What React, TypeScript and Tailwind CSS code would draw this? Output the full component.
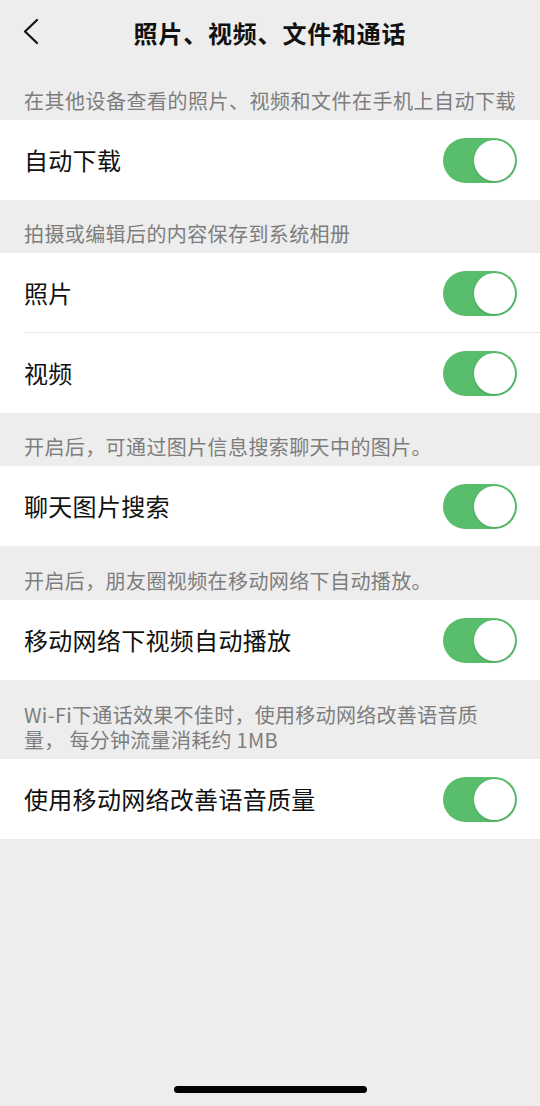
import React, { useState } from "react";

const font = { fontFamily: '"Noto Sans CJK SC", "Noto Sans", sans-serif' };

function Toggle({ on, onChange }: { on: boolean; onChange: () => void }) {
  return (
    <button
      onClick={onChange}
      className={`relative w-[74px] h-[45px] rounded-full transition-colors duration-200 ${on ? "bg-[#58be6b]" : "bg-[#e5e5e5]"}`}
    >
      <span
        className={`absolute top-[2px] w-[41px] h-[41px] rounded-full bg-white shadow-[0_1px_3px_rgba(0,0,0,0.15)] transition-all duration-200 ${on ? "left-[31px]" : "left-[2px]"}`}
      />
    </button>
  );
}

// grey section caption above each group
function Caption({ children, h }: { children: React.ReactNode; h: string }) {
  return (
    <div className={`px-6 text-[20px] leading-[25px] text-[#7d7d7d] flex flex-col justify-end pb-[7px] ${h}`}>
      {children}
    </div>
  );
}

function Row({ label, on, onChange, divider }: { label: string; on: boolean; onChange: () => void; divider?: boolean }) {
  return (
    <div className="relative bg-white h-[80px] pl-6 pr-[23px] flex items-center justify-between">
      <span className="text-[24px] tracking-[0.3px] text-[#111]">{label}</span>
      <Toggle on={on} onChange={onChange} />
      {divider && <div className="absolute left-6 right-0 bottom-0 h-px bg-[#e6e6e6]" />}
    </div>
  );
}

export default function App() {
  const [state, setState] = useState({
    autoDownload: true,
    photo: true,
    video: true,
    imageSearch: true,
    autoplay: true,
    voice: true,
  });
  const toggle = (k: keyof typeof state) => setState((s) => ({ ...s, [k]: !s[k] }));

  return (
    <div className="h-[1106px] bg-[#ededed] flex flex-col" style={font}>
      <header className="relative h-[66px] flex items-center justify-center shrink-0">
        <button className="absolute left-[22px] top-[18px] p-0">
          <svg width="18" height="27" viewBox="0 0 18 27" fill="none" stroke="#111" strokeWidth="2.2" strokeLinecap="round" strokeLinejoin="round">
            <path d="M15 2 L3 13.5 L15 25" />
          </svg>
        </button>
        <h1 className="text-[24px] font-bold tracking-[0.8px] text-[#111]">照片、视频、文件和通话</h1>
      </header>

      <Caption h="h-[54px]">
        <span className="tracking-[0.5px]">在其他设备查看的照片、视频和文件在手机上自动下载</span>
      </Caption>
      <Row label="自动下载" on={state.autoDownload} onChange={() => toggle("autoDownload")} />

      <Caption h="h-[53px]">
        <span className="tracking-[0.4px]">拍摄或编辑后的内容保存到系统相册</span>
      </Caption>
      <Row label="照片" on={state.photo} onChange={() => toggle("photo")} divider />
      <Row label="视频" on={state.video} onChange={() => toggle("video")} />

      <Caption h="h-[53px]">
        <span className="tracking-[0.4px]">开启后，可通过图片信息搜索聊天中的图片。</span>
      </Caption>
      <Row label="聊天图片搜索" on={state.imageSearch} onChange={() => toggle("imageSearch")} />

      <Caption h="h-[54px]">
        <span className="tracking-[0.4px]">开启后，朋友圈视频在移动网络下自动播放。</span>
      </Caption>
      <Row label="移动网络下视频自动播放" on={state.autoplay} onChange={() => toggle("autoplay")} />

      <Caption h="h-[79px]">
        <p className="tracking-[0.3px]">
          Wi-Fi下通话效果不佳时，使用移动网络改善语音质
          <br />
          量， 每分钟流量消耗约 1MB
        </p>
      </Caption>
      <Row label="使用移动网络改善语音质量" on={state.voice} onChange={() => toggle("voice")} />

      <div className="flex-1" />
      <div className="flex justify-center pb-[13px]">
        <div className="w-[193px] h-[7px] rounded-full bg-black" />
      </div>
    </div>
  );
}
